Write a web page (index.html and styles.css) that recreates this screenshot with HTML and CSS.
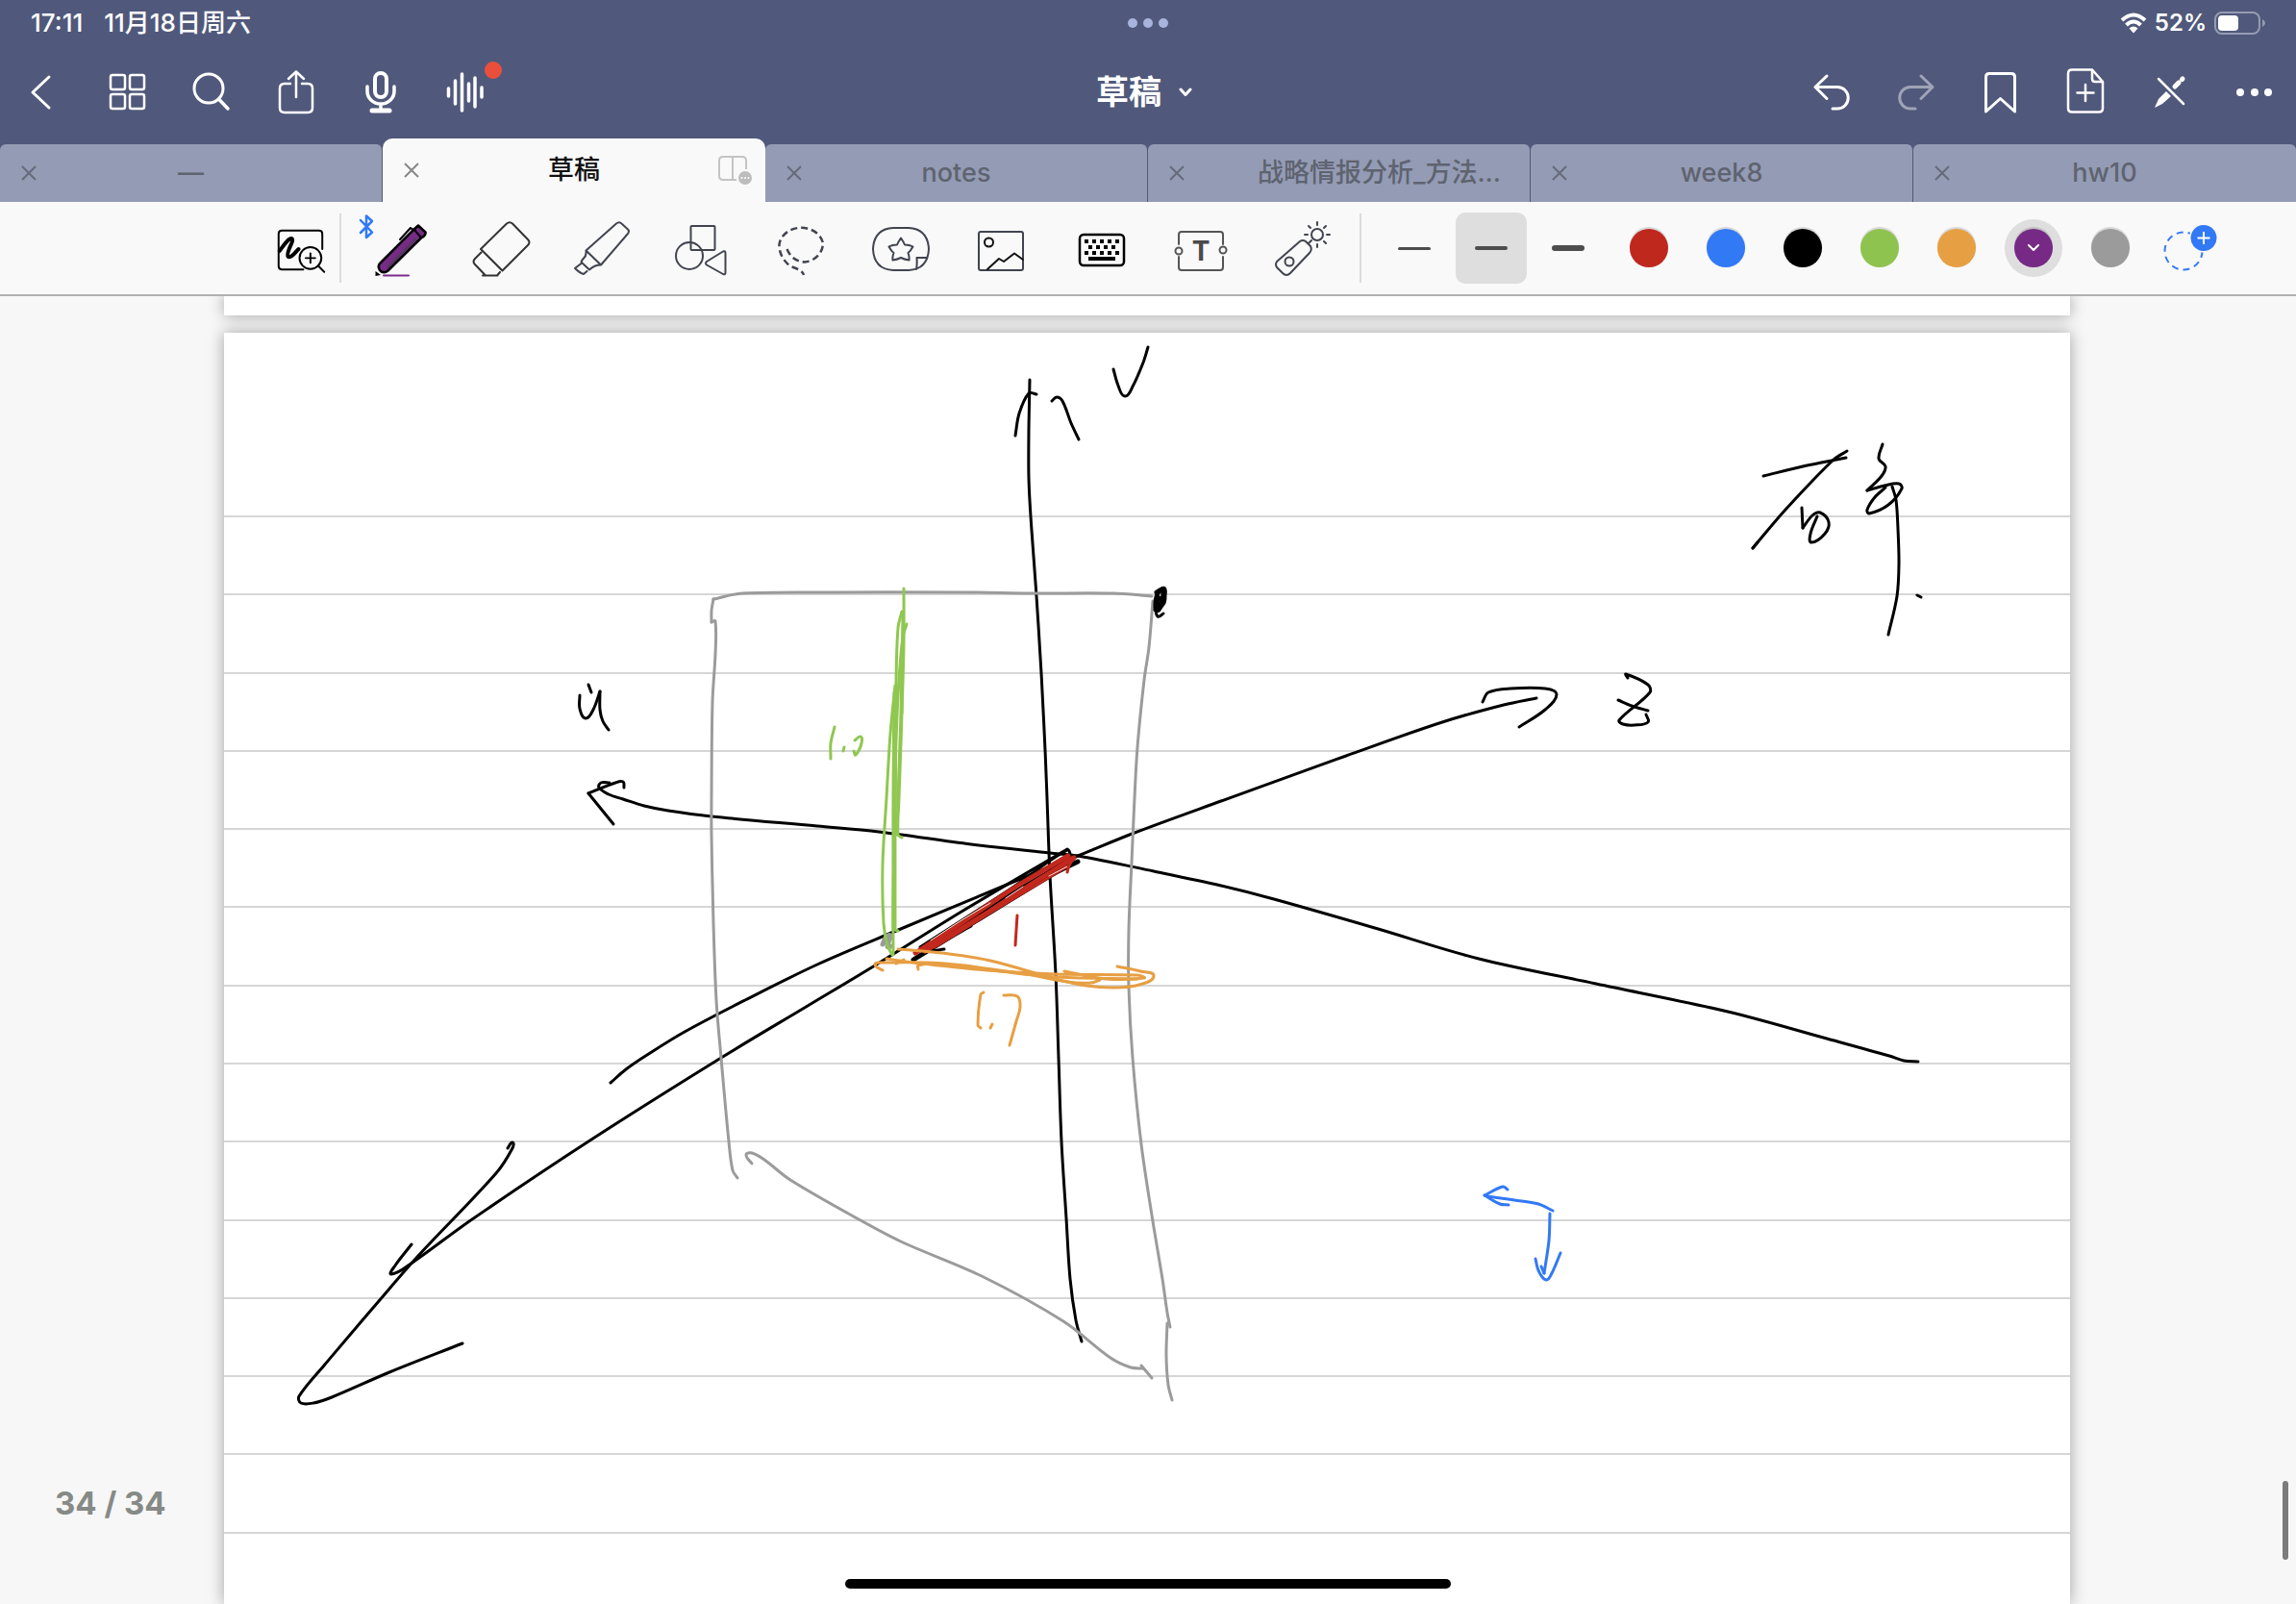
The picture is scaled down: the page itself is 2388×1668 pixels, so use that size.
FILE: index.html
```html
<!DOCTYPE html>
<html lang="zh-CN">
<head>
<meta charset="utf-8">
<meta name="viewport" content="width=device-width, initial-scale=1">
<title>草稿</title>
<link rel="stylesheet" href="styles.css">
</head>
<body>
<div class="app">
  <header class="header">
    <div class="status">
      <div class="status-left"><span>17:11</span><span>11月18日周六</span></div>
      <div class="status-dots"><i></i><i></i><i></i></div>
      <div class="status-right">
        <svg class="wifi" viewBox="0 0 28 22"><path d="M2 8Q14 -3 26 8M6.500 13Q14 6 21.500 13" fill="none" stroke="#fff" stroke-width="4"/><path d="M9.500 16.500Q14 12.500 18.500 16.500L14 21.500Z" fill="#fff"/></svg>
        <span>52%</span>
        <svg class="battery" viewBox="0 0 53 24"><rect x="1" y="1" width="46" height="22" rx="7" fill="none" stroke="#959bb2" stroke-width="2"/><rect x="4" y="4" width="21" height="16" rx="4" fill="#fff"/><path d="M50 8q3 1.500 3 4t-3 4z" fill="#959bb2"/></svg>
      </div>
    </div>
    <div class="nav">
      <div class="nav-group">
        <button class="nav-btn" aria-label="返回"><svg viewBox="-44 -48 88 96"><path d="M7 -16L-10 0L7 16"/></svg></button>
        <button class="nav-btn" aria-label="缩略图"><svg viewBox="-44 -48 88 96"><g stroke-width="2.500"><rect x="-17" y="-18" width="15" height="15" rx="2"/><rect x="3" y="-18" width="15" height="15" rx="2"/><rect x="-17" y="2" width="15" height="15" rx="2"/><rect x="3" y="2" width="15" height="15" rx="2"/></g></svg></button>
        <button class="nav-btn" aria-label="搜索"><svg viewBox="-44 -48 88 96"><circle cx="-3" cy="-4" r="15"/><path d="M7.500 7L17 17" stroke-width="3.500"/></svg></button>
        <button class="nav-btn" aria-label="分享"><svg viewBox="-44 -48 88 96"><path d="M-6 -9H-12Q-17 -9 -17 -4V16Q-17 21 -12 21H12Q17 21 17 16V-4Q17 -9 12 -9H6M0 5V-21M-8 -14L0 -21.500L8 -14" stroke-width="2.500"/></svg></button>
        <button class="nav-btn" aria-label="录音"><svg viewBox="-44 -48 88 96"><rect x="-6" y="-20" width="12" height="25" rx="6" stroke-width="4"/><path d="M-14 -6V-1A14 13 0 0 0 14 -1V-6M0 12V18" stroke-width="3.500"/><path d="M-9 19H9" stroke-width="5"/></svg></button>
        <button class="nav-btn" aria-label="录音播放"><svg viewBox="-44 -48 88 96"><path d="M-17.500 -4V4M-10.500 -12V12M-3.500 -19V19M3.500 -9V9M10 -15V15M17 -5V5" stroke-width="3.500"/><circle cx="29" cy="-23" r="9" fill="#ea4f3c" stroke="none"/></svg></button>
      </div>
      <button class="doc-title"><span>草稿</span><svg class="chevron" viewBox="0 0 14 10"><path d="M2 2L7 7.500L12 2"/></svg></button>
      <div class="nav-group nav-group--end">
        <button class="nav-btn" aria-label="撤销"><svg viewBox="-44 -48 88 96"><path d="M-4 -17L-16 -5.500L-4 6.500M-16 -5.500H7A11 11 0 0 1 7 17H2"/></svg></button>
        <button class="nav-btn nav-btn--off" aria-label="重做"><svg viewBox="-44 -48 88 96"><path d="M6 -17L18 -5.500L6 6.500M18 -5.500H-5A11 11 0 0 0 -5 17H0"/></svg></button>
        <button class="nav-btn" aria-label="书签"><svg viewBox="-44 -48 88 96"><path d="M-14.500 20V-16Q-14.500 -19.500 -11 -19.500H12Q15.500 -19.500 15.500 -16V20L.5 6.500Z"/></svg></button>
        <button class="nav-btn" aria-label="添加页面"><svg viewBox="-44 -48 88 96"><path d="M8 -23.500H-13Q-17 -23.500 -17 -19.500V16.500Q-17 20.500 -13 20.500H15Q19 20.500 19 16.500V-11ZM8 -23.500V-14Q8 -11 11 -11H19M1 -8V9M-7.500 .5H9.500" stroke-width="2.500"/></svg></button>
        <button class="nav-btn" aria-label="只读模式"><svg viewBox="-44 -48 88 96"><path d="M-11 -14L15 12" stroke-width="2.500"/><path d="M13.500 -13.500L14 -14M6 -6L10 -10" stroke-width="5"/><path d="M-3 -1L2 4L-7 12L-15 16L-11 7Z" fill="#fff" stroke="none"/></svg></button>
        <button class="nav-btn" aria-label="更多"><svg viewBox="-44 -48 88 96"><g fill="#fff" stroke="none"><circle cx="-14" cy="0" r="4"/><circle cx="1" cy="0" r="4"/><circle cx="15" cy="0" r="4"/></g></svg></button>
      </div>
    </div>
    <nav class="tabs">
      <div class="tab"><button class="tab-close" aria-label="关闭"><svg viewBox="0 0 16 16"><path d="M1 1L15 15M15 1L1 15"/></svg></button><a class="tab-title" href="#">—</a></div>
      <div class="tab tab--active"><button class="tab-close" aria-label="关闭"><svg viewBox="0 0 16 16"><path d="M1 1L15 15M15 1L1 15"/></svg></button><a class="tab-title" href="#">草稿</a>
        <button class="tab-split" aria-label="分屏"><svg viewBox="0 0 36 30"><path d="M29 14V5Q29 1 25 1H5Q1 1 1 5V21Q1 25 5 25H19M15 1V25" fill="none" stroke="#c4c4c4" stroke-width="2"/><circle cx="28" cy="23" r="7" fill="#bdbdbd"/><g fill="#fff"><circle cx="24.500" cy="23" r="1"/><circle cx="28" cy="23" r="1"/><circle cx="31.500" cy="23" r="1"/></g></svg></button></div>
      <div class="tab"><button class="tab-close" aria-label="关闭"><svg viewBox="0 0 16 16"><path d="M1 1L15 15M15 1L1 15"/></svg></button><a class="tab-title" href="#">notes</a></div>
      <div class="tab tab--long"><button class="tab-close" aria-label="关闭"><svg viewBox="0 0 16 16"><path d="M1 1L15 15M15 1L1 15"/></svg></button><a class="tab-title" href="#">战略情报分析_方法...</a></div>
      <div class="tab"><button class="tab-close" aria-label="关闭"><svg viewBox="0 0 16 16"><path d="M1 1L15 15M15 1L1 15"/></svg></button><a class="tab-title" href="#">week8</a></div>
      <div class="tab"><button class="tab-close" aria-label="关闭"><svg viewBox="0 0 16 16"><path d="M1 1L15 15M15 1L1 15"/></svg></button><a class="tab-title" href="#">hw10</a></div>
    </nav>
  </header>

  <div class="toolbar" role="toolbar">
    <button class="tool tool--zoom" aria-label="缩放窗口"><svg viewBox="-41 -40 82 80"><g stroke="#000"><path d="M23 1V-15Q23 -18.500 19.500 -18.500H-19.500Q-23 -18.500 -23 -15V19Q-23 22.500 -19.500 22.500H3"/><circle cx="10.500" cy="10.500" r="11.500"/><path d="M10.500 5.500V15.500M5.500 10.500H15.500M18.500 18.500L25 25"/><path d="M-22 3C-17 -4 -12 -11 -9 -10C-6 -8 -16 5 -13 9C-10 11 -6 5 -2 1" stroke-width="4"/></g></svg></button>
    <span class="divider"></span>
    <div class="tools">
      <button class="tool" aria-label="钢笔"><svg viewBox="-52 -40 104 80"><path d="M-42 -29L-30 -16.500L-36 -11V-33.500L-30 -28L-42 -16" stroke="#3279f6" stroke-width="2.500"/><path d="M13 -19L18 -23.500L25.500 -16.500Q26 -13 21 -10.500L-14 24Q-19 27 -22 23Q-25 18 -21 15Z" fill="#762b85" stroke="#000" stroke-width="2.500"/><path d="M14 -19L21 -11M10 -21L-1 -9M10 -21L13 -19" stroke="#000"/><path d="M15 -9L-13 19" stroke="#4c3b58"/><path d="M-26.500 24L-21 28L-26.500 29Z" fill="#000" stroke="none"/><path d="M-18 28.500H8" stroke="#7b2d8e"/></svg></button>
      <button class="tool" aria-label="橡皮擦"><svg viewBox="-52 -40 104 80"><path stroke="#333" d="M-21 1L6 -25.500Q9 -28 12 -25.500L28 -9Q31 -6 28 -3L1.500 23.500ZM-20.500 4.500L-27 11Q-30 14 -27 17L-16 28.500H-4L-1 25M-19 28.500H-3.500"/></svg></button>
      <button class="tool" aria-label="荧光笔"><svg viewBox="-52 -40 104 80"><path d="M-15.500 2.500L16 -25.500Q19 -28 21.500 -25.500L28 -19.500Q30 -17.500 28 -15L0 17.500ZM-15.500 2.500Q-15 8 -17.500 10Q-19.500 12 -20.500 14.500L-12 22.500Q-7 17.500 0 17.500M-20.500 16L-27 21Q-22 26 -18 27L-14.500 24"/></svg></button>
      <button class="tool" aria-label="形状"><svg viewBox="-52 -40 104 80"><rect x="-10.500" y="-23" width="25" height="25" rx="1"/><circle cx="-12" cy="8" r="14"/><path d="M6 14L23 3.500Q25.500 2.500 25.500 5V25.500Q25.500 28 23 27L6 17.500Q4 15.500 6 14Z"/></svg></button>
      <button class="tool" aria-label="套索"><svg viewBox="-52 -40 104 80"><path stroke-dasharray="7 4" stroke-width="2.500" stroke-linecap="butt" d="M-14.500 1Q-9 14 4 14.500A21 20 0 0 0 23 -5A23 19.500 0 0 0 -22.500 -4Q-23 9 -11 19Q2 23 3 28"/></svg></button>
      <button class="tool" aria-label="贴纸"><svg viewBox="-52 -40 104 80"><path d="M-8 -21H8Q28 -20 29 1Q28 22 8 23H-8Q-28 22 -29 1Q-28 -20 -8 -21ZM16 22Q17 18 16.500 10H27M0 -10.500Q3 -6 4 -3.500Q9 -3.500 12.500 -1.500Q10 3 7.500 5Q9 9 8.500 12.500Q4 12 0 10Q-4 12 -8.500 12.500Q-9 9 -7.500 5Q-10 3 -12.500 -1.500Q-9 -3.500 -4 -3.500Q-3 -6 0 -10.500Z"/></svg></button>
      <button class="tool" aria-label="图片"><svg viewBox="-52 -40 104 80"><rect x="-23" y="-17" width="46" height="40" rx="2"/><g stroke="#111"><circle cx="-12.500" cy="-6" r="4.500"/><path d="M-14 22L-2 11L3 14L14 5.500L23 12"/></g></svg></button>
      <button class="tool" aria-label="键盘"><svg viewBox="-52 -40 104 80"><rect x="-22" y="-14" width="46" height="32" rx="4" stroke="#000" stroke-width="2.500"/><path stroke="#000" stroke-width="4" stroke-linecap="butt" d="M-17 -7H-13M-9 -7H-5M-1 -7H3M7 -7H11M15 -7H19M-13 -1H-9M-5 -1H-1M3 -1H7M11 -1H15M-17 5H-13M-9 5H-5M-1 5H3M7 5H11M15 5H19M-13 11H15"/></svg></button>
      <button class="tool" aria-label="文本"><svg viewBox="-52 -40 104 80"><g stroke="#555"><path d="M-23 -4V-14Q-23 -17 -20 -17H20Q23 -17 23 -14V-4M-23 9V20Q-23 23 -20 23H20Q23 23 23 20V9"/><circle cx="-23" cy="3" r="3.500"/><circle cx="23" cy="2" r="3.500"/></g><text class="tool-letter" x="0" y="13">T</text></svg></button>
      <button class="tool" aria-label="激光笔"><svg viewBox="-52 -40 104 80"><path d="M-25 14L-1 -7Q2 -9 5 -7L10 -2Q12 2 9 5L-11 26Q-15 30 -19 26L-25 20Q-27 17 -25 14ZM8 -5L11 -8"/><circle cx="-12" cy="14" r="4.500"/><circle cx="17" cy="-14" r="6"/><path d="M17 -27V-24M17 -4V-1M4 -14H7M27 -14H30M8 -23L10 -21M24 -7L26 -5M26 -23L24 -21"/></svg></button>
    </div>
    <span class="divider"></span>
    <div class="swatches">
      <button class="stroke-btn" aria-label="细"><i class="line line--thin"></i></button>
      <button class="stroke-btn stroke-btn--on" aria-label="中"><i class="line line--mid"></i></button>
      <button class="stroke-btn" aria-label="粗"><i class="line line--thick"></i></button>
    </div>
    <div class="swatches swatches--colors">
      <button class="swatch" aria-label="红"><i class="dot dot--red"></i></button>
      <button class="swatch" aria-label="蓝"><i class="dot dot--blue"></i></button>
      <button class="swatch" aria-label="黑"><i class="dot dot--black"></i></button>
      <button class="swatch" aria-label="绿"><i class="dot dot--green"></i></button>
      <button class="swatch" aria-label="橙"><i class="dot dot--orange"></i></button>
      <button class="swatch swatch--on" aria-label="紫"><i class="dot dot--purple"><svg class="dot-chevron" viewBox="0 0 14 10"><path d="M2 2L7 7L12 2"/></svg></i></button>
      <button class="swatch" aria-label="灰"><i class="dot dot--gray"></i></button>
      <button class="swatch" aria-label="添加颜色"><svg class="add-color" viewBox="-40 -40 80 80"><circle cx="-7" cy="0" r="19.500" fill="none" stroke="#3279f6" stroke-width="2" stroke-dasharray="7 5"/><circle cx="14" cy="-13.500" r="15" fill="#f9f9f9"/><circle cx="14" cy="-13.500" r="13.500" fill="#3279f6"/><path d="M14 -20V-7M7.500 -13.500H20.500" stroke="#fff" stroke-width="2"/></svg></button>
    </div>
  </div>

  <main class="workspace">
    <div class="sheet sheet--previous"></div>
    <div class="sheet">
      <svg class="ink" viewBox="233 346 1920 1322"><g id="rules"></g><g id="strokes"></g></svg>
    </div>
    <p class="page-count">34 / 34</p>
    <i class="scroll-thumb"></i>
    <i class="home-bar"></i>
  </main>
</div>
<script src="ink.js"></script>
</body>
</html>
```

FILE: styles.css
```css
* { box-sizing: border-box; }

body {
  margin: 0;
  font-family: Inter, "Noto Sans CJK SC", sans-serif;
  line-height: 36px;
  background: #f7f7f7;
}

button {
  padding: 0;
  border: 0;
  background: none;
  color: inherit;
  font: inherit;
}

svg { display: block; }

.app {
  display: flex;
  flex-direction: column;
  height: 100vh;
  overflow: hidden;
}

/* Header */
.header { background: #50597b; color: #fff; }

.status {
  display: grid;
  grid-template-columns: 1fr auto 1fr;
  align-items: center;
  height: 48px;
  padding: 0 32px;
  font-size: 24px;
  font-weight: 600;
}
.status-left { display: flex; align-items: baseline; gap: 22px; font-size: 26px; font-weight: 500; }
.status-dots { display: flex; gap: 6px; }
.status-dots i { width: 10px; height: 10px; border-radius: 50%; background: #a9b4dd; }
.status-right { display: flex; justify-content: flex-end; align-items: center; gap: 8px; }
.wifi { width: 28px; height: 22px; }
.battery { width: 53px; height: 24px; }

.nav {
  display: grid;
  grid-template-columns: 1fr auto 1fr;
  height: 96px;
}
.nav-group { display: flex; }
.nav-group--end { justify-content: flex-end; }
.nav-btn { width: 88px; height: 96px; }
.nav-btn--off { opacity: .45; }
.nav-btn svg, .chevron, .dot-chevron {
  fill: none;
  stroke: #fff;
  stroke-width: 3;
  stroke-linecap: round;
  stroke-linejoin: round;
}
.doc-title {
  display: flex;
  align-items: center;
  gap: 18px;
  padding-right: 8px;
  font-size: 34px;
  font-weight: 600;
}
.chevron { width: 14px; height: 10px; }

.tabs {
  display: grid;
  grid-template-columns: repeat(6, 1fr);
  align-items: end;
}
.tab {
  display: grid;
  grid-template-columns: 60px 1fr 60px;
  align-items: center;
  height: 60px;
  border-right: 1px solid #50597b;
  border-radius: 6px 6px 0 0;
  background: #949bb4;
  color: #5e6370;
  font-size: 27px;
  font-weight: 500;
}
.tab:last-child { border-right: 0; }
.tab--active { height: 66px; border-right: 0; border-radius: 10px 10px 0 0; background: #f9f9f9; color: #111; }
.tab--long { grid-template-columns: 60px 1fr 30px; }
.tab--long .tab-title { text-align: right; }
.tab-close { display: grid; place-items: center; height: 60px; }
.tab-close svg { width: 16px; height: 16px; fill: none; stroke: #666b7a; stroke-width: 2; }
.tab--active .tab-close svg { stroke: #888; }
.tab-title { color: inherit; text-align: center; text-decoration: none; white-space: nowrap; }
.tab-split { display: grid; justify-content: end; padding-right: 13px; }
.tab-split svg { width: 36px; height: 30px; }

/* Toolbar */
.toolbar {
  display: flex;
  align-items: center;
  height: 98px;
  padding: 0 0 0 272px;
  border-bottom: 2px solid #b0b0b0;
  background: #f9f9f9;
}
.divider { width: 2px; height: 72px; background: #dcdcdc; }
.tools { display: flex; padding: 0 9px 0 10px; }
.tool { width: 104px; height: 80px; }
.tool--zoom { width: 81px; }
.tool svg {
  width: 100%;
  height: 80px;
  fill: none;
  stroke: #41444f;
  stroke-width: 2;
  stroke-linecap: round;
  stroke-linejoin: round;
}
.tool-letter {
  fill: #4a4a4a;
  stroke: none;
  font-family: Inter, sans-serif;
  font-size: 28px;
  font-weight: 700;
  text-anchor: middle;
}
.swatches { display: flex; align-items: center; padding-left: 15px; }
.swatches--colors { padding-left: 4px; }
.stroke-btn, .swatch { display: grid; place-items: center; width: 74px; height: 74px; margin: 0 3px; }
.stroke-btn--on { border-radius: 10px; background: #dedede; }
.line { width: 34px; border-radius: 3px; background: #4d4d4d; }
.line--thin { height: 3px; }
.line--mid { height: 4px; }
.line--thick { height: 6px; }
.swatch--on { width: 60px; height: 60px; margin: 0 10px; border-radius: 50%; background: #dedede; }
.dot {
  display: grid;
  place-items: center;
  width: 40px;
  height: 40px;
  border-radius: 50%;
  box-shadow: 0 -2px 1px rgba(0, 0, 0, .14);
}
.dot--red { background: #bf281d; }
.dot--blue { background: #3279f6; }
.dot--black { background: #000; }
.dot--green { background: #8fc350; }
.dot--orange { background: #e79f43; }
.dot--purple { background: #762a85; }
.dot--gray { background: #9b9b9b; }
.dot-chevron { width: 14px; height: 10px; stroke-width: 2; }
.add-color { width: 80px; height: 80px; }

/* Pages */
.workspace {
  position: relative;
  flex: 1;
  display: flex;
  flex-direction: column;
  gap: 18px;
  min-height: 0;
  padding: 0 235px 0 233px;
  overflow: hidden;
}
.sheet { flex-shrink: 0; background: #fff; box-shadow: 0 0 16px rgba(0, 0, 0, .35); }
.sheet--previous { height: 20px; }
.ink { width: 100%; height: auto; fill: none; stroke-width: 3; stroke-linecap: round; stroke-linejoin: round; }
.rule { stroke: #d6d6d6; stroke-width: 2; }

.ink-black { stroke: #000; }
.ink-gray { stroke: #9b9b9b; }
.ink-green { stroke: #8fc750; }
.ink-orange { stroke: #e79f43; }
.ink-red { stroke: #c2281d; }
.ink-blue { stroke: #3279f6; }
.ink-white { stroke: #f3e4e2; stroke-width: 1; }
.ink--bold { stroke-width: 5; }

.page-count {
  position: absolute;
  left: 57px;
  bottom: 84px;
  margin: 0;
  color: #868a86;
  font-size: 33px;
  font-weight: 700;
  line-height: 42px;
}
.scroll-thumb {
  position: absolute;
  right: 8px;
  bottom: 46px;
  width: 6px;
  height: 82px;
  border-radius: 3px;
  background: #7c7c7c;
}
.home-bar {
  position: absolute;
  left: 50%;
  bottom: 16px;
  width: 630px;
  height: 10px;
  margin-left: -315px;
  border-radius: 5px;
  background: #000;
}
```

FILE: ink.js
```js
// Each stroke: ink colour, optional "bold", then its pen samples as x,y pairs.
const strokes = [
  // vertical axis
  ["black", "1071,395 1070,447 1070,497 1072,537 1078,620 1083,700 1087,780 1089,830 1092,910 1098,1013 1101,1100 1104,1187 1109,1267 1113,1330 1119,1373 1125,1395"],
  ["black", "1078,410 1070,409 1060,430 1056,453"],
  ["black", "1094,417 1099,413 1105,417 1114,440 1122,457"],
  ["black", "1158,384 1163,401 1170,412 1178,402 1189,377 1194,361"],
  // horizontal axis
  ["black", "638,857 625,841 612,825"],
  ["black", "612,825 640,814 648,813 649,819"],
  ["black", "634,814 625,814 623,819 633,826 648,831 670,838 695,843 740,849 850,859 914,865 1010,878 1092,887 1121,890 1200,906 1270,921 1325,935 1430,965 1538,997 1660,1023 1797,1052 1900,1080 1965,1098 1980,1103 1995,1104"],
  ["black", "603,723 603,737 609,747 617,738 624,719"],
  ["black", "624,719 624,738 627,750 633,759"],
  ["black", "612,712 615,720"],
  // depth axis
  ["black", "635,1126 651,1112 673,1097 712,1073 775,1040 850,1003 932,968 1083,905 1121,890 1180,866 1270,833 1400,786 1500,751 1564,733 1598,726"],
  ["black", "1542,730 1548,720 1571,716 1607,716 1619,722 1607,738 1580,756"],
  ["black", "1693,705 1691,701 1714,712 1716,720 1684,749 1688,753 1700,754 1714,751 1712,743"],
  ["black", "1683,728 1697,734 1714,739"],
  ["black", "1110,883 1000,948 910,1004 840,1046 750,1100 612,1187 491,1268 426,1315 407,1325 411,1316 428,1294"],
  ["black", "528,1194 533,1188 533,1194 516,1220 434,1307 394,1353 337,1420 311,1452 313,1459 326,1459 345,1453 405,1427 481,1397"],
  // name in the corner
  ["black", "1834,495 1875,485 1920,476"],
  ["black", "1921,469 1907,478 1857,530 1823,570"],
  ["black", "1828,564 1823,570"],
  ["black", "1874,528 1875,549"],
  ["black", "1875,549 1885,536 1893,533 1902,543 1898,555 1884,564 1883,555 1890,537"],
  ["black", "1958,462 1954,477 1961,485 1957,495 1942,510"],
  ["black", "1942,510 1960,505 1975,503 1978,508 1964,525 1944,534 1942,530 1950,517 1961,507"],
  ["black", "1968,506 1972,520 1974,550 1975,587 1973,620 1964,660"],
  ["black", "1994,619 1998,621"],
  // image plane
  ["gray", "1198,620 1158,617 1073,617 1011,616 872,616 772,617 742,623"],
  ["gray", "742,623 740,635 740,647"],
  ["gray", "740,647 744,646 744,680 741,730 740,830 740,868 742,960 745,1040 750,1100 758,1187 762,1217 767,1225"],
  ["gray", "1199,625 1195,673 1190,707 1183,777 1180,830 1177,897 1174,967 1174,1027 1178,1100 1187,1190 1199,1270 1209,1330 1214,1365 1217,1380"],
  ["gray", "1214,1376 1213,1410 1215,1440 1219,1456"],
  ["gray", "782,1210 776,1201 782,1199 795,1206 822,1227 895,1269 939,1292 1021,1327 1106,1374 1155,1412 1176,1422 1189,1423"],
  ["gray", "1187,1420 1198,1433"],
  ["gray bold", "918,982 922,974 926,973 923,984 927,984"],
  // corner dot
  ["black bold", "1203,616 1211,613 1206,630 1202,632 1205,615 1210,616 1205,634 1203,624 1210,622"],
  ["black bold", "1211,615 1210,627 1202,634"],
  ["black", "1202,632 1204,641 1210,638"],
  // optical centre segment
  ["black bold", "950,998 1000,967 1095,909 1121,896"],
  ["black", "957,985 1050,925 1110,884 1112,892 1050,930 980,976"],
  ["black", "982,987 968,988 1010,963"],
  ["red bold", "952,991 1010,953 1060,920 1111,890"],
  ["red bold", "962,989 1030,947 1070,921 1117,892"],
  ["red", "972,985 1040,943 1110,901"],
  ["white", "968,978 1000,957 1030,939"],
  ["white", "1046,934 1064,922"],
  ["white", "1091,911 1112,900"],
  ["red", "1117,892 1112,900 1110,907"],
  ["red", "1058,952 1057,967 1056,983"],
  // height
  ["green", "940,612 940,670 938,742"],
  ["green", "943,649 939,663 935,707 932,770 931,830 930,966 934,968"],
  ["green", "938,636 934,653 932,710 931,830 929,930 929,993"],
  ["green", "931,713 926,763 922,830 918,900 919,960 923,983 928,993"],
  ["green bold", "931,720 930,830 930,965"],
  ["green", "938,690 938,740 935,830 934,868 938,871"],
  ["green", "939,640 937,740 934,830 933,868"],
  ["green", "868,756 864,773 864,789"],
  ["green", "878,777 877,781"],
  ["green", "889,770 895,766 896,773 890,785 888,781"],
  // width
  ["orange", "918,1009 910,1003 917,1001 983,1002 1067,1013 1110,1021 1135,1022 1144,1019"],
  ["orange", "934,987 980,991 1030,999 1098,1018 1130,1025 1160,1027 1185,1024 1200,1015 1186,1010 1162,1005"],
  ["orange", "922,997 950,1001 1027,1009 1098,1013 1183,1014 1190,1017 1150,1018 1107,1010"],
  ["orange", "955,1008 955,1004 975,1002 1040,1010 1100,1016 1183,1018"],
  ["orange", "932,1002 940,998"],
  ["orange", "1023,1032 1020,1034 1017,1066 1020,1069"],
  ["orange", "1032,1065 1030,1069"],
  ["orange", "1044,1035 1058,1036 1061,1047 1057,1062 1050,1087"],
  // pixel axes
  ["blue", "1615,1259 1600,1252 1575,1248 1547,1244"],
  ["blue", "1568,1237 1563,1234 1544,1243"],
  ["blue", "1544,1243 1560,1252 1569,1253"],
  ["blue", "1612,1262 1611,1290 1606,1324"],
  ["blue", "1606,1324 1603,1317"],
  ["blue", "1597,1309 1600,1321 1608,1331 1614,1324 1623,1303"]
];

// Catmull-Rom spline through the samples, written as cubic segments.
function toPath(points) {
  let d = `M${points[0]}`;
  for (let i = 0; i < points.length - 1; i++) {
    const a = points[i - 1] || points[i];
    const b = points[i];
    const c = points[i + 1];
    const e = points[i + 2] || c;
    const span = Math.hypot(c[0] - b[0], c[1] - b[1]);
    // Handle along the direction from -> to, a third of the segment long.
    const handle = (from, to) => {
      const len = Math.hypot(to[0] - from[0], to[1] - from[1]) || 1;
      const k = span / 3 / len;
      return [(to[0] - from[0]) * k, (to[1] - from[1]) * k];
    };
    const h1 = handle(a, c);
    const h2 = handle(b, e);
    d += `C${b[0] + h1[0]},${b[1] + h1[1]} ${c[0] - h2[0]},${c[1] - h2[1]} ${c}`;
  }
  return d;
}

const ns = "http://www.w3.org/2000/svg";
function addPath(parent, className, d) {
  const path = document.createElementNS(ns, "path");
  path.setAttribute("class", className);
  path.setAttribute("d", d);
  parent.appendChild(path);
}

const rules = document.getElementById("rules");
for (let i = 0; i < 14; i++) {
  addPath(rules, "rule", `M233,${Math.round(537 + i * 81.28)}H2153`);
}

const layer = document.getElementById("strokes");
for (const [ink, samples] of strokes) {
  const [color, weight] = ink.split(" ");
  const points = samples.split(" ").map(p => p.split(",").map(Number));
  addPath(layer, `ink-${color}${weight ? " ink--bold" : ""}`, toPath(points));
}
```
